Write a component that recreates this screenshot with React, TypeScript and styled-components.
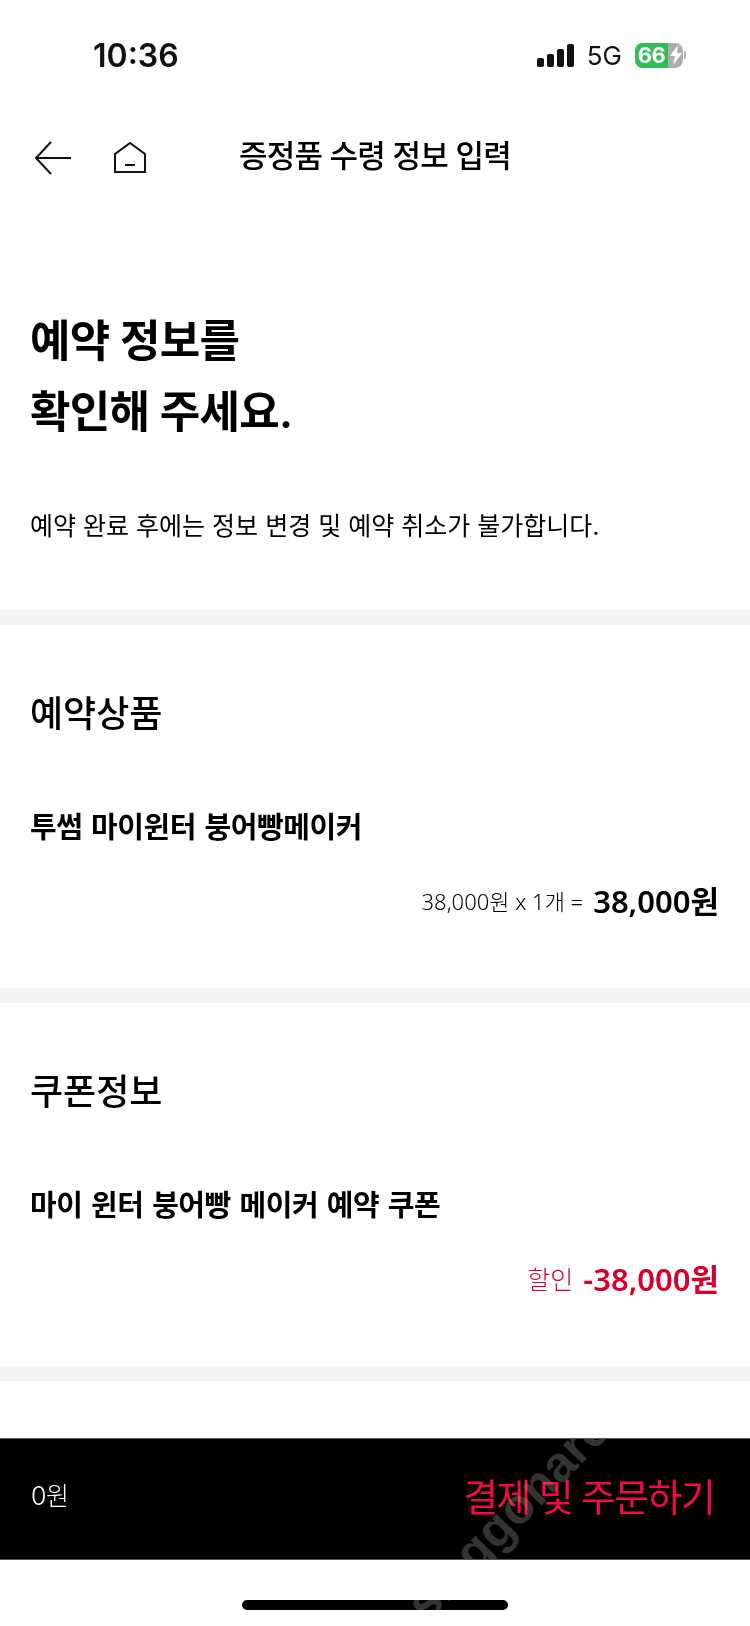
import React from 'react'
import styled, { createGlobalStyle } from 'styled-components'

const FONT = `Inter, "Noto Sans CJK KR", sans-serif`
const PRICE_FONT = `"Noto Sans", "Noto Sans CJK KR", sans-serif`

const GlobalStyle = createGlobalStyle`
  html, body {
    margin: 0;
    padding: 0;
    background: #fff;
  }
  * {
    box-sizing: border-box;
  }
`

const Page = styled.div`
  position: relative;
  width: 750px;
  height: 1626px;
  overflow: hidden;
  background: #fff;
  color: #000;
  font-family: ${FONT};
`

const StatusBar = styled.div`
  height: 110px;
  padding: 0 64px 0 93px;
  display: flex;
  justify-content: space-between;
  align-items: center;
`

const Time = styled.div`
  font-size: 32px;
  font-weight: 600;
  color: #111;
`

const StatusRight = styled.div`
  display: flex;
  align-items: center;
  gap: 13px;
`

const NetworkLabel = styled.span`
  font-size: 26px;
  font-weight: 400;
  color: #111;
`

const Battery = styled.div`
  display: flex;
  align-items: center;
  gap: 1px;
`

const BatteryBody = styled.div`
  display: flex;
  width: 48px;
  height: 25px;
  border-radius: 8px;
  overflow: hidden;
  background: #adadad;
`

const BatteryNub = styled.div`
  width: 2px;
  height: 8px;
  border-radius: 0 2px 2px 0;
  background: #adadad;
`

const BatteryFill = styled.div`
  width: 33px;
  background: #2fbd55;
  color: #fff;
  font-size: 22px;
  font-weight: 700;
  line-height: 25px;
  text-align: center;
  letter-spacing: -0.5px;
`

const BatteryBolt = styled.div`
  flex: 1;
  display: flex;
  align-items: center;
  justify-content: center;
`

const NavBar = styled.div`
  height: 92px;
  padding-left: 34px;
  display: flex;
  align-items: center;
`

const BackIcon = styled.svg`
  width: 38px;
  height: 34px;
  margin-top: 4px;
`

const HomeIcon = styled.svg`
  width: 32px;
  height: 31px;
  margin-left: 42px;
  margin-top: 3px;
`

const NavTitle = styled.div`
  margin-left: 93px;
  margin-bottom: 6px;
  font-size: 31px;
  font-weight: 500;
  letter-spacing: -0.8px;
`

const Intro = styled.div`
  height: 408px;
  padding: 104px 30px 0;
`

const Heading = styled.h1`
  margin: 0;
  font-size: 44px;
  line-height: 71px;
  font-weight: 600;
  letter-spacing: -0.7px;
`

const Notice = styled.p`
  margin: 60px 0 0;
  font-size: 25px;
  line-height: 36px;
  font-weight: 400;
  letter-spacing: 0;
`

const Divider = styled.div`
  height: 15px;
  background: #f4f4f4;
`

const Section = styled.section`
  height: 363px;
  padding: 64px 30px 0;
`

const SectionTitle = styled.h2`
  margin: 0;
  font-size: 36px;
  line-height: 50px;
  font-weight: 500;
`

const ItemName = styled.div`
  margin-top: 68px;
  font-size: 29px;
  line-height: 42px;
  font-weight: 600;
  letter-spacing: -0.45px;
  word-spacing: 1.75px;
`

const PriceRow = styled.div`
  margin-top: 28px;
  display: flex;
  justify-content: flex-end;
  align-items: center;
  gap: 10px;
  padding-right: 1px;
  font-family: ${PRICE_FONT};
`

const PriceDetail = styled.span<{ $red?: boolean }>`
  font-size: ${({ $red }) => ($red ? '25px' : '22px')};
  font-weight: 300;
  color: ${({ $red }) => ($red ? '#d5002b' : '#000')};
`

const PriceTotal = styled.span<{ $red?: boolean }>`
  font-size: 31px;
  font-weight: 600;
  color: ${({ $red }) => ($red ? '#d5002b' : '#000')};
`

const CheckoutBar = styled.div`
  position: absolute;
  left: 0;
  right: 0;
  top: 1438px;
  height: 122px;
  padding: 0 36px 10px 31px;
  display: flex;
  justify-content: space-between;
  align-items: center;
  background: #000;
  border-top: 1px solid #555;
  border-bottom: 1px solid #555;
`

const Total = styled.div`
  color: #fff;
  font-size: 25px;
  font-weight: 300;
  letter-spacing: -0.5px;
`

const OrderLabel = styled.div`
  color: #f50a45;
  font-size: 38px;
  font-weight: 400;
  letter-spacing: -1.7px;
`

const HomeIndicator = styled.div`
  position: absolute;
  left: 242px;
  top: 1600px;
  width: 266px;
  height: 10px;
  border-radius: 5px;
  background: #000;
`

const Watermark = styled.div`
  position: absolute;
  left: 415px;
  top: 1587px;
  font-family: "Liberation Sans", sans-serif;
  font-size: 50px;
  font-weight: 700;
  line-height: 50px;
  color: #333;
  white-space: nowrap;
  transform: rotate(-46deg);
  transform-origin: left center;
  mix-blend-mode: lighten;
  pointer-events: none;
`

const SignalBars = () => (
  <svg width="37" height="23" viewBox="0 0 37 23" fill="#111">
    <rect x="0" y="14" width="7" height="9" rx="2" />
    <rect x="10" y="10" width="7" height="13" rx="2" />
    <rect x="20" y="5" width="7" height="18" rx="2" />
    <rect x="30" y="0" width="7" height="23" rx="2" />
  </svg>
)

const App: React.FC = () => (
  <Page>
    <GlobalStyle />
    <StatusBar>
      <Time>10:36</Time>
      <StatusRight>
        <SignalBars />
        <NetworkLabel>5G</NetworkLabel>
        <Battery>
          <BatteryBody>
            <BatteryFill>66</BatteryFill>
            <BatteryBolt>
              <svg width="12" height="20" viewBox="0 0 12 20" fill="#fff">
                <path d="M8 0 0 11h5l-2 9 9-12H7z" />
              </svg>
            </BatteryBolt>
          </BatteryBody>
          <BatteryNub />
        </Battery>
      </StatusRight>
    </StatusBar>
    <NavBar>
      <BackIcon viewBox="0 0 38 34" fill="none" stroke="#111" strokeWidth="2">
        <path d="M37 17H2M17 1 2 17l15 16" />
      </BackIcon>
      <HomeIcon viewBox="0 0 32 31" fill="none" stroke="#111" strokeWidth="2">
        <path d="M1 30V12L16 1l15 11v18z" />
        <path d="M11 23h10" />
      </HomeIcon>
      <NavTitle>증정품 수령 정보 입력</NavTitle>
    </NavBar>
    <Intro>
      <Heading>
        예약 정보를
        <br />
        확인해 주세요.
      </Heading>
      <Notice>예약 완료 후에는 정보 변경 및 예약 취소가 불가합니다.</Notice>
    </Intro>
    <Divider />
    <Section>
      <SectionTitle>예약상품</SectionTitle>
      <ItemName>투썸 마이윈터 붕어빵메이커</ItemName>
      <PriceRow>
        <PriceDetail>38,000원 x 1개 =</PriceDetail>
        <PriceTotal>38,000원</PriceTotal>
      </PriceRow>
    </Section>
    <Divider />
    <Section>
      <SectionTitle>쿠폰정보</SectionTitle>
      <ItemName>마이 윈터 붕어빵 메이커 예약 쿠폰</ItemName>
      <PriceRow>
        <PriceDetail $red>할인</PriceDetail>
        <PriceTotal $red>-38,000원</PriceTotal>
      </PriceRow>
    </Section>
    <Divider />
    <CheckoutBar>
      <Total>0원</Total>
      <OrderLabel>결제 및 주문하기</OrderLabel>
    </CheckoutBar>
    <HomeIndicator />
    <Watermark>s.eggonarc</Watermark>
  </Page>
)

export default App
